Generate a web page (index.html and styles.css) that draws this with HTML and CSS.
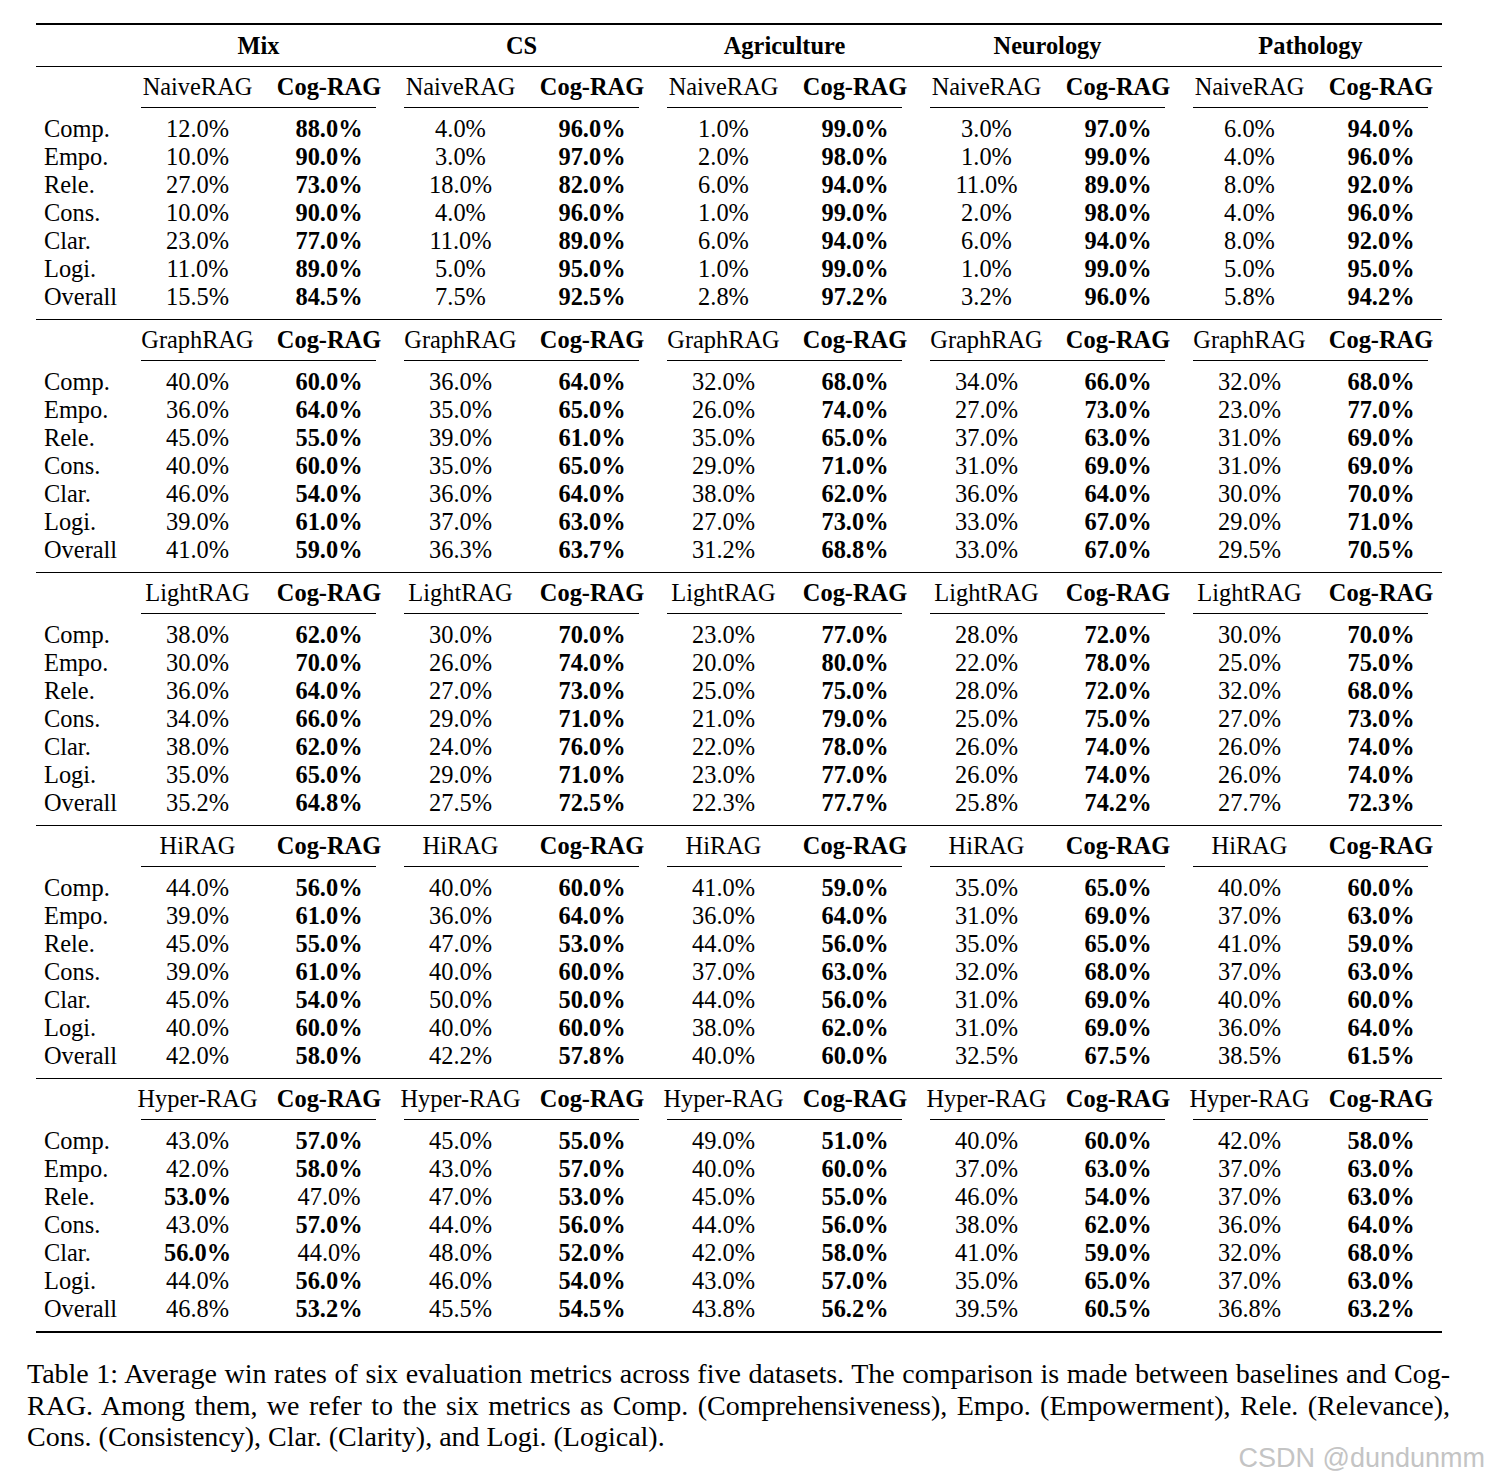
FILE: index.html
```html
<!DOCTYPE html>
<html>
<head>
<meta charset="utf-8">
<link rel="stylesheet" href="styles.css">
</head>
<body>
<div class="page">
  <div class="tbl">
    <div class="rule-thick"></div>
    <div class="hd"><span></span><span class="ds">Mix</span><span class="ds">CS</span><span class="ds">Agriculture</span><span class="ds">Neurology</span><span class="ds">Pathology</span></div>
    <div class="rule-thin"></div>

    <div class="sh"><span></span><span>NaiveRAG</span><b>Cog-RAG</b><span>NaiveRAG</span><b>Cog-RAG</b><span>NaiveRAG</span><b>Cog-RAG</b><span>NaiveRAG</span><b>Cog-RAG</b><span>NaiveRAG</span><b>Cog-RAG</b></div>
    <div class="cm"><span></span><i></i><i></i><i></i><i></i><i></i></div>
    <div class="body">
      <div class="r"><span class="l">Comp.</span><span>12.0%</span><b>88.0%</b><span>4.0%</span><b>96.0%</b><span>1.0%</span><b>99.0%</b><span>3.0%</span><b>97.0%</b><span>6.0%</span><b>94.0%</b></div>
      <div class="r"><span class="l">Empo.</span><span>10.0%</span><b>90.0%</b><span>3.0%</span><b>97.0%</b><span>2.0%</span><b>98.0%</b><span>1.0%</span><b>99.0%</b><span>4.0%</span><b>96.0%</b></div>
      <div class="r"><span class="l">Rele.</span><span>27.0%</span><b>73.0%</b><span>18.0%</span><b>82.0%</b><span>6.0%</span><b>94.0%</b><span>11.0%</span><b>89.0%</b><span>8.0%</span><b>92.0%</b></div>
      <div class="r"><span class="l">Cons.</span><span>10.0%</span><b>90.0%</b><span>4.0%</span><b>96.0%</b><span>1.0%</span><b>99.0%</b><span>2.0%</span><b>98.0%</b><span>4.0%</span><b>96.0%</b></div>
      <div class="r"><span class="l">Clar.</span><span>23.0%</span><b>77.0%</b><span>11.0%</span><b>89.0%</b><span>6.0%</span><b>94.0%</b><span>6.0%</span><b>94.0%</b><span>8.0%</span><b>92.0%</b></div>
      <div class="r"><span class="l">Logi.</span><span>11.0%</span><b>89.0%</b><span>5.0%</span><b>95.0%</b><span>1.0%</span><b>99.0%</b><span>1.0%</span><b>99.0%</b><span>5.0%</span><b>95.0%</b></div>
      <div class="r"><span class="l">Overall</span><span>15.5%</span><b>84.5%</b><span>7.5%</span><b>92.5%</b><span>2.8%</span><b>97.2%</b><span>3.2%</span><b>96.0%</b><span>5.8%</span><b>94.2%</b></div>
    </div>
    <div class="rule-mid"></div>

    <div class="sh"><span></span><span>GraphRAG</span><b>Cog-RAG</b><span>GraphRAG</span><b>Cog-RAG</b><span>GraphRAG</span><b>Cog-RAG</b><span>GraphRAG</span><b>Cog-RAG</b><span>GraphRAG</span><b>Cog-RAG</b></div>
    <div class="cm"><span></span><i></i><i></i><i></i><i></i><i></i></div>
    <div class="body">
      <div class="r"><span class="l">Comp.</span><span>40.0%</span><b>60.0%</b><span>36.0%</span><b>64.0%</b><span>32.0%</span><b>68.0%</b><span>34.0%</span><b>66.0%</b><span>32.0%</span><b>68.0%</b></div>
      <div class="r"><span class="l">Empo.</span><span>36.0%</span><b>64.0%</b><span>35.0%</span><b>65.0%</b><span>26.0%</span><b>74.0%</b><span>27.0%</span><b>73.0%</b><span>23.0%</span><b>77.0%</b></div>
      <div class="r"><span class="l">Rele.</span><span>45.0%</span><b>55.0%</b><span>39.0%</span><b>61.0%</b><span>35.0%</span><b>65.0%</b><span>37.0%</span><b>63.0%</b><span>31.0%</span><b>69.0%</b></div>
      <div class="r"><span class="l">Cons.</span><span>40.0%</span><b>60.0%</b><span>35.0%</span><b>65.0%</b><span>29.0%</span><b>71.0%</b><span>31.0%</span><b>69.0%</b><span>31.0%</span><b>69.0%</b></div>
      <div class="r"><span class="l">Clar.</span><span>46.0%</span><b>54.0%</b><span>36.0%</span><b>64.0%</b><span>38.0%</span><b>62.0%</b><span>36.0%</span><b>64.0%</b><span>30.0%</span><b>70.0%</b></div>
      <div class="r"><span class="l">Logi.</span><span>39.0%</span><b>61.0%</b><span>37.0%</span><b>63.0%</b><span>27.0%</span><b>73.0%</b><span>33.0%</span><b>67.0%</b><span>29.0%</span><b>71.0%</b></div>
      <div class="r"><span class="l">Overall</span><span>41.0%</span><b>59.0%</b><span>36.3%</span><b>63.7%</b><span>31.2%</span><b>68.8%</b><span>33.0%</span><b>67.0%</b><span>29.5%</span><b>70.5%</b></div>
    </div>
    <div class="rule-mid"></div>

    <div class="sh"><span></span><span>LightRAG</span><b>Cog-RAG</b><span>LightRAG</span><b>Cog-RAG</b><span>LightRAG</span><b>Cog-RAG</b><span>LightRAG</span><b>Cog-RAG</b><span>LightRAG</span><b>Cog-RAG</b></div>
    <div class="cm"><span></span><i></i><i></i><i></i><i></i><i></i></div>
    <div class="body">
      <div class="r"><span class="l">Comp.</span><span>38.0%</span><b>62.0%</b><span>30.0%</span><b>70.0%</b><span>23.0%</span><b>77.0%</b><span>28.0%</span><b>72.0%</b><span>30.0%</span><b>70.0%</b></div>
      <div class="r"><span class="l">Empo.</span><span>30.0%</span><b>70.0%</b><span>26.0%</span><b>74.0%</b><span>20.0%</span><b>80.0%</b><span>22.0%</span><b>78.0%</b><span>25.0%</span><b>75.0%</b></div>
      <div class="r"><span class="l">Rele.</span><span>36.0%</span><b>64.0%</b><span>27.0%</span><b>73.0%</b><span>25.0%</span><b>75.0%</b><span>28.0%</span><b>72.0%</b><span>32.0%</span><b>68.0%</b></div>
      <div class="r"><span class="l">Cons.</span><span>34.0%</span><b>66.0%</b><span>29.0%</span><b>71.0%</b><span>21.0%</span><b>79.0%</b><span>25.0%</span><b>75.0%</b><span>27.0%</span><b>73.0%</b></div>
      <div class="r"><span class="l">Clar.</span><span>38.0%</span><b>62.0%</b><span>24.0%</span><b>76.0%</b><span>22.0%</span><b>78.0%</b><span>26.0%</span><b>74.0%</b><span>26.0%</span><b>74.0%</b></div>
      <div class="r"><span class="l">Logi.</span><span>35.0%</span><b>65.0%</b><span>29.0%</span><b>71.0%</b><span>23.0%</span><b>77.0%</b><span>26.0%</span><b>74.0%</b><span>26.0%</span><b>74.0%</b></div>
      <div class="r"><span class="l">Overall</span><span>35.2%</span><b>64.8%</b><span>27.5%</span><b>72.5%</b><span>22.3%</span><b>77.7%</b><span>25.8%</span><b>74.2%</b><span>27.7%</span><b>72.3%</b></div>
    </div>
    <div class="rule-mid"></div>

    <div class="sh"><span></span><span>HiRAG</span><b>Cog-RAG</b><span>HiRAG</span><b>Cog-RAG</b><span>HiRAG</span><b>Cog-RAG</b><span>HiRAG</span><b>Cog-RAG</b><span>HiRAG</span><b>Cog-RAG</b></div>
    <div class="cm"><span></span><i></i><i></i><i></i><i></i><i></i></div>
    <div class="body">
      <div class="r"><span class="l">Comp.</span><span>44.0%</span><b>56.0%</b><span>40.0%</span><b>60.0%</b><span>41.0%</span><b>59.0%</b><span>35.0%</span><b>65.0%</b><span>40.0%</span><b>60.0%</b></div>
      <div class="r"><span class="l">Empo.</span><span>39.0%</span><b>61.0%</b><span>36.0%</span><b>64.0%</b><span>36.0%</span><b>64.0%</b><span>31.0%</span><b>69.0%</b><span>37.0%</span><b>63.0%</b></div>
      <div class="r"><span class="l">Rele.</span><span>45.0%</span><b>55.0%</b><span>47.0%</span><b>53.0%</b><span>44.0%</span><b>56.0%</b><span>35.0%</span><b>65.0%</b><span>41.0%</span><b>59.0%</b></div>
      <div class="r"><span class="l">Cons.</span><span>39.0%</span><b>61.0%</b><span>40.0%</span><b>60.0%</b><span>37.0%</span><b>63.0%</b><span>32.0%</span><b>68.0%</b><span>37.0%</span><b>63.0%</b></div>
      <div class="r"><span class="l">Clar.</span><span>45.0%</span><b>54.0%</b><span>50.0%</span><b>50.0%</b><span>44.0%</span><b>56.0%</b><span>31.0%</span><b>69.0%</b><span>40.0%</span><b>60.0%</b></div>
      <div class="r"><span class="l">Logi.</span><span>40.0%</span><b>60.0%</b><span>40.0%</span><b>60.0%</b><span>38.0%</span><b>62.0%</b><span>31.0%</span><b>69.0%</b><span>36.0%</span><b>64.0%</b></div>
      <div class="r"><span class="l">Overall</span><span>42.0%</span><b>58.0%</b><span>42.2%</span><b>57.8%</b><span>40.0%</span><b>60.0%</b><span>32.5%</span><b>67.5%</b><span>38.5%</span><b>61.5%</b></div>
    </div>
    <div class="rule-mid"></div>

    <div class="sh"><span></span><span>Hyper-RAG</span><b>Cog-RAG</b><span>Hyper-RAG</span><b>Cog-RAG</b><span>Hyper-RAG</span><b>Cog-RAG</b><span>Hyper-RAG</span><b>Cog-RAG</b><span>Hyper-RAG</span><b>Cog-RAG</b></div>
    <div class="cm"><span></span><i></i><i></i><i></i><i></i><i></i></div>
    <div class="body">
      <div class="r"><span class="l">Comp.</span><span>43.0%</span><b>57.0%</b><span>45.0%</span><b>55.0%</b><span>49.0%</span><b>51.0%</b><span>40.0%</span><b>60.0%</b><span>42.0%</span><b>58.0%</b></div>
      <div class="r"><span class="l">Empo.</span><span>42.0%</span><b>58.0%</b><span>43.0%</span><b>57.0%</b><span>40.0%</span><b>60.0%</b><span>37.0%</span><b>63.0%</b><span>37.0%</span><b>63.0%</b></div>
      <div class="r"><span class="l">Rele.</span><b>53.0%</b><span>47.0%</span><span>47.0%</span><b>53.0%</b><span>45.0%</span><b>55.0%</b><span>46.0%</span><b>54.0%</b><span>37.0%</span><b>63.0%</b></div>
      <div class="r"><span class="l">Cons.</span><span>43.0%</span><b>57.0%</b><span>44.0%</span><b>56.0%</b><span>44.0%</span><b>56.0%</b><span>38.0%</span><b>62.0%</b><span>36.0%</span><b>64.0%</b></div>
      <div class="r"><span class="l">Clar.</span><b>56.0%</b><span>44.0%</span><span>48.0%</span><b>52.0%</b><span>42.0%</span><b>58.0%</b><span>41.0%</span><b>59.0%</b><span>32.0%</span><b>68.0%</b></div>
      <div class="r"><span class="l">Logi.</span><span>44.0%</span><b>56.0%</b><span>46.0%</span><b>54.0%</b><span>43.0%</span><b>57.0%</b><span>35.0%</span><b>65.0%</b><span>37.0%</span><b>63.0%</b></div>
      <div class="r"><span class="l">Overall</span><span>46.8%</span><b>53.2%</b><span>45.5%</span><b>54.5%</b><span>43.8%</span><b>56.2%</b><span>39.5%</span><b>60.5%</b><span>36.8%</span><b>63.2%</b></div>
    </div>
    <div class="rule-bottom"></div>
  </div>

  <div class="caption">
    <span class="line">Table 1: Average win rates of six evaluation metrics across five datasets. The comparison is made between baselines and Cog-</span>
    <span class="line">RAG. Among them, we refer to the six metrics as Comp. (Comprehensiveness), Empo. (Empowerment), Rele. (Relevance),</span>
    <span class="line last">Cons. (Consistency), Clar. (Clarity), and Logi. (Logical).</span>
  </div>

  <div class="watermark">CSDN @dundunmm</div>
</div>
</body>
</html>
```

FILE: styles.css
```css
html, body {
  margin: 0;
  padding: 0;
  background: #ffffff;
}

body {
  font-family: "Liberation Serif", "Times New Roman", serif;
  color: #000000;
}

.page {
  position: relative;
  width: 1490px;
  height: 1484px;
  padding-top: 23px;
  box-sizing: border-box;
}

.tbl {
  margin-left: 36px;
  width: 1406px;
  font-size: 24.4px;
}

.rule-thick,
.rule-bottom {
  height: 2px;
  background: #000;
}

.rule-thin,
.rule-mid {
  height: 1px;
  background: #000;
}

.rule-bottom {
  margin-top: 8px;
}

.rule-mid {
  margin-top: 8px;
}

.hd,
.sh,
.cm,
.r {
  display: grid;
  grid-template-columns: 91px repeat(5, 141px 122px);
}

.hd {
  height: 41px;
  align-items: center;
  font-weight: bold;
  line-height: 28px;
}

.hd .ds {
  grid-column: span 2;
  text-align: center;
}

.sh {
  height: 40px;
  align-items: center;
  line-height: 28px;
  text-align: center;
  white-space: nowrap;
}

.sh b {
  font-weight: bold;
}

.cm {
  height: 1px;
}

.cm i {
  grid-column: span 2;
  display: block;
  height: 1px;
  margin: 0 14px;
  background: #000;
}

.body {
  padding-top: 7px;
}

.r {
  height: 28px;
  line-height: 28px;
  text-align: center;
  white-space: nowrap;
}

.r b {
  font-weight: bold;
}

.r .l {
  text-align: left;
  padding-left: 8px;
}

.caption {
  margin: 25px 0 0 27px;
  width: 1423px;
  font-size: 28px;
  line-height: 31.5px;
}

.caption .line {
  display: block;
  text-align: justify;
  text-align-last: justify;
  white-space: nowrap;
}

.caption .line.last {
  text-align: left;
  text-align-last: left;
}

.watermark {
  position: absolute;
  right: 5px;
  top: 1445px;
  font-family: "Liberation Sans", Arial, sans-serif;
  font-size: 27px;
  line-height: 26px;
  color: #c4c4c4;
}
```
